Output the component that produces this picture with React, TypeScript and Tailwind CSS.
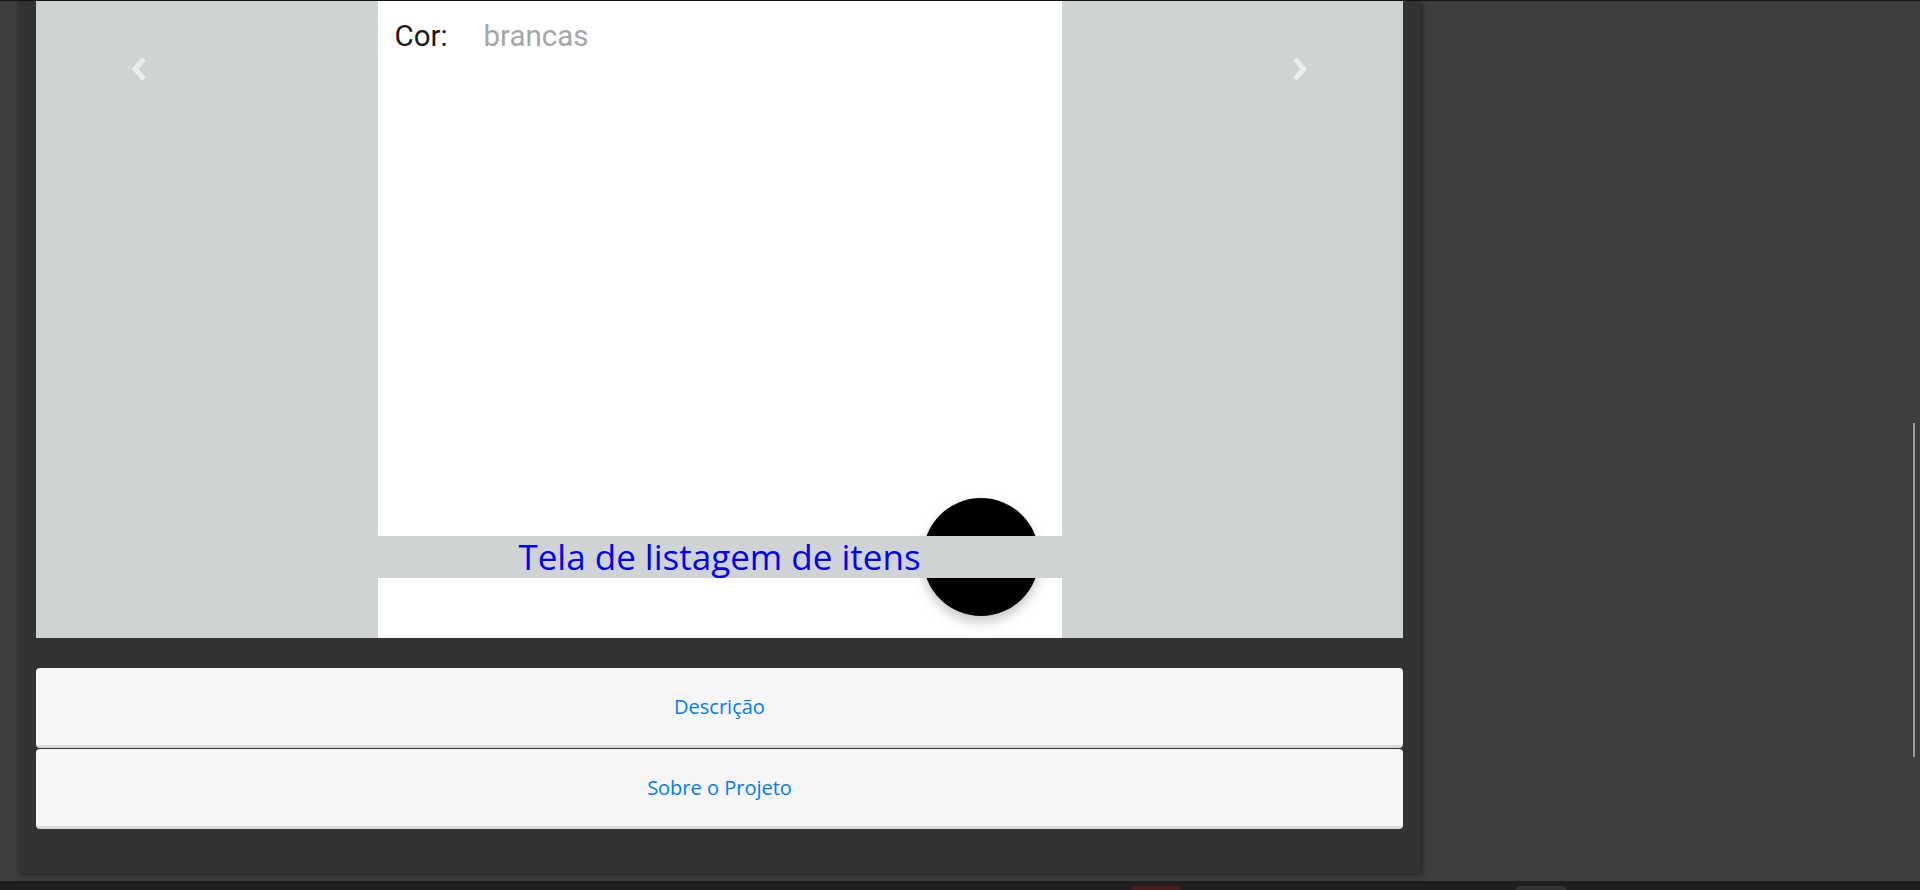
const sans = { fontFamily: '"Open Sans", "Liberation Sans", sans-serif' };
const roboto = { fontFamily: 'Roboto, "Liberation Sans", sans-serif' };

function Chevron({ dir }: { dir: "left" | "right" }) {
	const points = dir === "left" ? "13,3 4,13 13,23" : "3,3 12,13 3,23";
	return (
		<svg width="16" height="26" viewBox="0 0 16 26" fill="none">
			<polyline points={points} stroke="#ebeced" strokeWidth="5" strokeLinejoin="miter" />
		</svg>
	);
}

function PhoneShot() {
	return (
		<div className="relative w-[684px] h-full bg-white overflow-hidden">
			<div className="flex items-baseline pt-[18px] pl-[17px] text-[29.5px] leading-[34px]" style={roboto}>
				<span className="text-[#1a1a1a] w-[89px]">Cor:</span>
				<span className="text-[#a6a6a6]">brancas</span>
			</div>
			{/* floating action button from the app screen */}
			<div className="absolute left-[545px] top-[497px] w-[116px] h-[118px] rounded-full bg-black shadow-[0_6px_12px_rgba(0,0,0,0.22)]" />
			<div className="absolute left-0 right-0 top-[535px] h-[42px] bg-[#d0d3d4]">
				<p className="text-center text-[35px] leading-[42px] text-[#0000ff] whitespace-nowrap" style={sans}>
					Tela de listagem de itens
				</p>
			</div>
		</div>
	);
}

function PanelButton({ label }: { label: string }) {
	return (
		<button
			type="button"
			className="w-full h-[80px] flex items-center justify-center rounded-[4px] bg-[#f6f6f6] border-b-[3px] border-[#dadada] text-[20px] text-[#007bff]"
			style={sans}
		>
			{label}
		</button>
	);
}

export default function App() {
	return (
		<div className="relative w-full h-[890px] bg-[#3e3e3e] flex flex-col overflow-hidden">
			<div className="h-px bg-[#151515]" />
			<div className="flex-1 flex">
				<div className="ml-[18px] w-[1402px] h-[872px] bg-[#333333] pl-[18px] pr-[17px] shadow-[2px_2px_6px_rgba(0,0,0,0.45)] flex flex-col">
					<div className="relative h-[637px] bg-[#d0d3d4] flex justify-center">
						<PhoneShot />
						<div className="absolute left-[95px] top-[55px]">
							<Chevron dir="left" />
						</div>
						<div className="absolute right-[95px] top-[55px]">
							<Chevron dir="right" />
						</div>
					</div>
					<div className="mt-[30px] flex flex-col gap-px">
						<PanelButton label="Descrição" />
						<PanelButton label="Sobre o Projeto" />
					</div>
				</div>
			</div>
			<div className="h-[9px] bg-[#1f1f1f] flex items-end">
				<div className="ml-[1131px] w-[50px] h-[4px] rounded-t-[4px] bg-[#4a1d1d]" />
				<div className="ml-[335px] w-[50px] h-[4px] rounded-t-[4px] bg-[#333333]" />
			</div>
			<div className="absolute right-[5px] top-[423px] w-[2px] h-[334px] bg-[#9a9a9a]" />
		</div>
	);
}
